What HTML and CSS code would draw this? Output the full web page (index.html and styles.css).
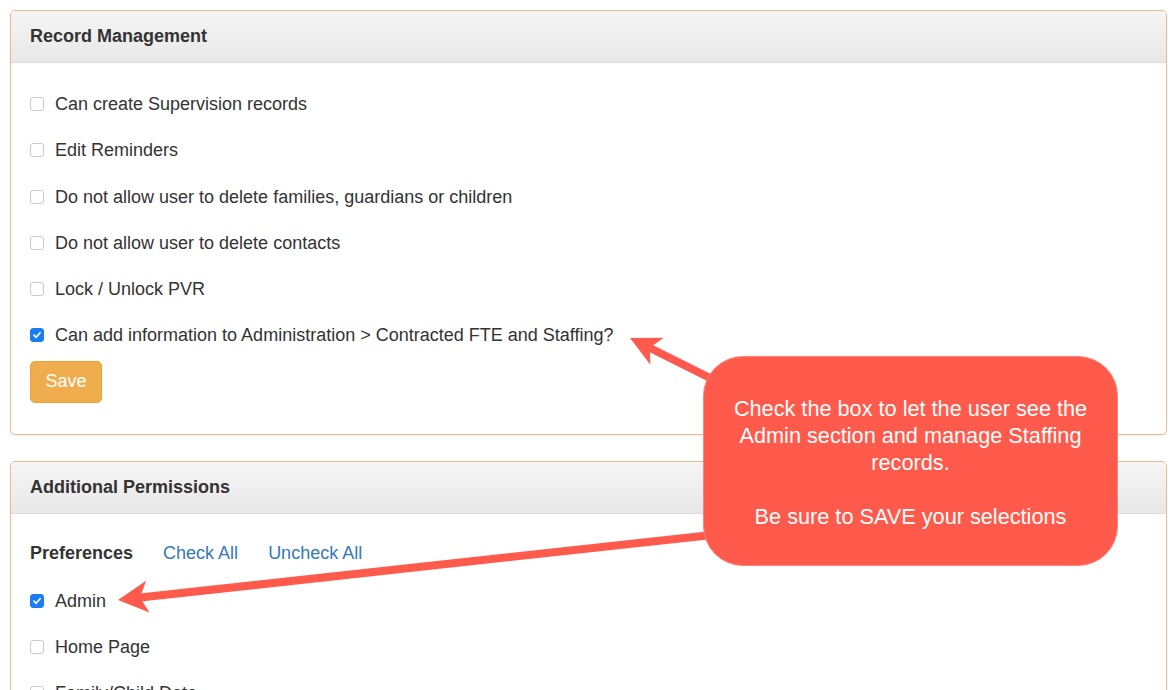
FILE: index.html
```html
<!DOCTYPE html>
<html lang="en">
<head>
  <meta charset="UTF-8" />
  <title>User Permissions</title>
  <link rel="stylesheet" href="styles.css">
</head>
<body>

  <div class="page">
    <div class="panel">
      <div class="panel-heading">Record Management</div>
      <div class="panel-body">
        <label class="check"><span class="box"></span>Can create Supervision records</label>
        <label class="check"><span class="box"></span>Edit Reminders</label>
        <label class="check"><span class="box"></span>Do not allow user to delete families, guardians or children</label>
        <label class="check"><span class="box"></span>Do not allow user to delete contacts</label>
        <label class="check"><span class="box"></span>Lock / Unlock PVR</label>
        <label class="check"><span class="box checked"><svg viewBox="0 0 14 14"><path d="M3.5 7.2 L6 9.7 L10.6 4.3" /></svg></span>Can add information to Administration &gt; Contracted FTE and Staffing?</label>
        <button class="btn-save">Save</button>
      </div>
    </div>

    <div class="panel">
      <div class="panel-heading">Additional Permissions</div>
      <div class="panel-body">
        <div class="pref-row">
          <strong>Preferences</strong>
          <a href="#">Check All</a>
          <a href="#">Uncheck All</a>
        </div>
        <label class="check"><span class="box checked"><svg viewBox="0 0 14 14"><path d="M3.5 7.2 L6 9.7 L10.6 4.3" /></svg></span>Admin</label>
        <label class="check"><span class="box"></span>Home Page</label>
        <label class="check"><span class="box"></span>Family/Child Data</label>
      </div>
    </div>
  </div>

  <!-- annotation layer -->
  <svg class="arrows" width="1176" height="690" viewBox="0 0 1176 690">
    <line x1="714" y1="380" x2="650" y2="348" />
    <polygon points="630,338 663.6,337.7 649.8,347.7 650.4,364.7" />
    <line x1="712" y1="535" x2="138" y2="597.8" />
    <polygon points="118,600 146.1,580.8 139.9,597.6 149.5,612.6" />
  </svg>
  <div class="callout">
    <p>Check the box to let the user see the Admin section and manage Staffing records.</p>
    <p>Be sure to SAVE your selections</p>
  </div>

</body>
</html>
```

FILE: styles.css
```css
* {
  margin: 0; padding: 0; box-sizing: border-box;
}
body {
  font-family: "Liberation Sans", Arial, sans-serif;
  font-size: 18px;
  color: #333;
  background: #fff;
  width: 1176px;
  height: 690px;
  overflow: hidden;
  position: relative;
}
.page {
  padding: 10px 9px 0 10px;
}
.panel {
  border: 1px solid #ebb98b;
  border-radius: 5px;
  box-shadow: 0 1px 2px rgba(0,0,0,0.06);
  margin-bottom: 26px;
  background: #fff;
}
.panel-heading {
  height: 52px;
  padding: 0 19px;
  display: flex;
  align-items: center;
  font-weight: bold;
  background: linear-gradient(#f5f5f5, #e8e8e8);
  border-bottom: 1px solid #dcdcdc;
  border-radius: 4px 4px 0 0;
}
.panel-body {
  padding: 30px 19px 31px;
}
.check {
  display: flex;
  align-items: center;
  height: 22px;
  line-height: 22px;
  margin-bottom: 24.25px;
}
.box {
  width: 14px;
  height: 14px;
  border: 1px solid #c9c9c9;
  border-radius: 3px;
  background: #fff;
  margin-right: 11px;
  display: flex;
}
.box.checked {
  background: #1a7cf3;
  border-color: #1a7cf3;
}
.box svg {
  width: 12px;
  height: 12px;
}
.box path {
  fill: none;
  stroke: #fff;
  stroke-width: 2;
  stroke-linecap: round;
  stroke-linejoin: round;
}
.btn-save {
  margin-top: -10px;
  font-family: inherit;
  font-size: 18px;
  color: #fff;
  background: #f0ad4e;
  border: 1px solid #eea236;
  border-radius: 5px;
  width: 72px;
  height: 42px;
}
.panel + .panel .panel-body {
  padding-top: 29px;
}
.pref-row {
  display: flex;
  align-items: center;
  height: 22px;
  margin-bottom: 25px;
}
.pref-row strong {
  margin-right: 30px;
}
.pref-row a {
  color: #337ab7;
  text-decoration: none;
  margin-right: 30px;
}
.arrows {
  position: absolute;
  left: 0;
  top: 0;
  pointer-events: none;
}
.arrows line {
  stroke: #ff5a4b;
  stroke-width: 8;
}
.arrows polygon {
  fill: #ff5a4b;
}
.callout {
  position: absolute;
  left: 703px;
  top: 356px;
  width: 415px;
  height: 210px;
  background: #ff5a4b;
  border: 1px solid #ff8277;
  border-radius: 40px;
  color: #fff;
  font-size: 21.7px;
  line-height: 27px;
  text-align: center;
  display: flex;
  flex-direction: column;
  justify-content: center;
  padding: 2px 20px 0;
}
.callout p + p {
  margin-top: 27px;
}
```
